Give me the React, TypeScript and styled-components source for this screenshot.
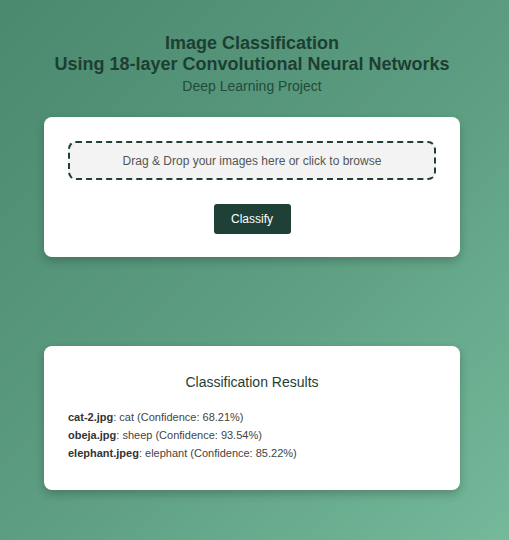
import styled, { createGlobalStyle } from "styled-components";

const GlobalStyle = createGlobalStyle`
  html, body {
    margin: 0;
    padding: 0;
  }
  body {
    min-height: 540px;
    font-family: "Liberation Sans", Arial, sans-serif;
    background: linear-gradient(135deg, #4a896e 0%, #5c9c80 50%, #73b99a 100%);
    background-attachment: fixed;
  }
`;

const Page = styled.div`
  min-height: 540px;
  padding: 33px 49px 40px 44px;
  box-sizing: border-box;
  display: flex;
  flex-direction: column;
  align-items: stretch;
`;

const Header = styled.header`
  text-align: center;
  color: #1d3e33;
  margin-bottom: 22px;

  h1 {
    margin: 0;
    font-size: 18px;
    line-height: 21px;
    font-weight: 700;
  }

  p {
    margin: 2px 0 0;
    font-size: 14px;
    line-height: 18px;
    color: #234a3c;
  }
`;

const Card = styled.section<{ $gap?: number; $bottom?: number }>`
  background: #fff;
  border-radius: 8px;
  box-shadow: 0 4px 10px rgba(0, 0, 0, 0.22);
  padding: 24px 24px ${(p) => p.$bottom ?? 23}px;
  margin-bottom: ${(p) => p.$gap ?? 0}px;
  display: flex;
  flex-direction: column;
`;

const DropZone = styled.div`
  height: 39px;
  box-sizing: border-box;
  border: 2px dashed #1f4037;
  border-radius: 8px;
  background: #f3f3f3;
  color: #555;
  font-size: 12px;
  display: flex;
  align-items: center;
  justify-content: center;
  cursor: pointer;
`;

const Button = styled.button`
  align-self: center;
  margin-top: 24px;
  width: 77px;
  height: 30px;
  border: none;
  border-radius: 3px;
  background: #1f4037;
  color: #fff;
  font-family: inherit;
  font-size: 12px;
  cursor: pointer;
`;

const ResultsTitle = styled.h2`
  margin: 4px 0 18px;
  text-align: center;
  font-size: 14px;
  font-weight: 400;
  color: #1d3e33;
`;

const ResultList = styled.ul`
  list-style: none;
  margin: 0;
  padding: 0;
  font-size: 11px;
  line-height: 18px;
  color: #444;

  strong {
    color: #333;
  }
`;

const results = [
  { file: "cat-2.jpg", label: "cat", conf: "68.21" },
  { file: "obeja.jpg", label: "sheep", conf: "93.54" },
  { file: "elephant.jpeg", label: "elephant", conf: "85.22" },
];

function App() {
  return (
    <>
      <GlobalStyle />
      <Page>
        <Header>
          <h1>Image Classification</h1>
          <h1>Using 18-layer Convolutional Neural Networks</h1>
          <p>Deep Learning Project</p>
        </Header>

        <Card $gap={89}>
          <DropZone>Drag &amp; Drop your images here or click to browse</DropZone>
          <Button>Classify</Button>
        </Card>

        <Card $bottom={28}>
          <ResultsTitle>Classification Results</ResultsTitle>
          <ResultList>
            {results.map((r) => (
              <li key={r.file}>
                <strong>{r.file}</strong>: {r.label} (Confidence: {r.conf}%)
              </li>
            ))}
          </ResultList>
        </Card>
      </Page>
    </>
  );
}

export default App;
